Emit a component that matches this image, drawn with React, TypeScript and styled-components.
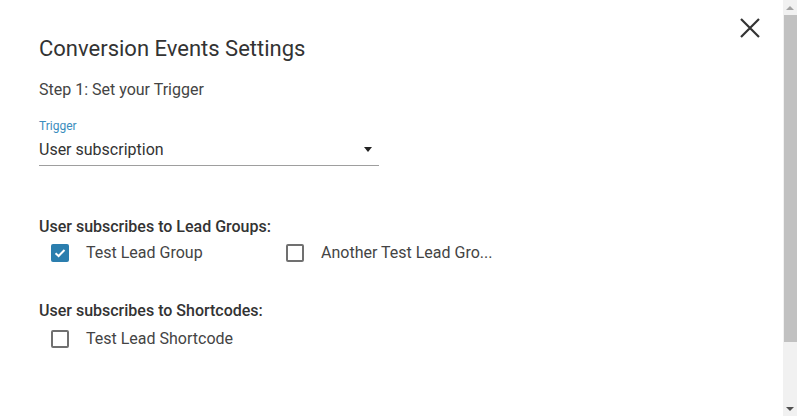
import React from "react";
import styled, { createGlobalStyle } from "styled-components";

const Global = createGlobalStyle`
  html, body { margin: 0; padding: 0; height: 100%; overflow: hidden; }
  body { font-family: Roboto, "Noto Sans", Arial, sans-serif; background: #fff; color: #333; }
`;

const Window = styled.div`
  display: flex;
  height: 100vh;
`;

const Dialog = styled.div`
  position: relative;
  flex: 1;
  box-sizing: border-box;
  padding: 36px 39px 0 39px;
`;

const Scrollbar = styled.div`
  width: 14px;
  display: flex;
  flex-direction: column;
  background: #f1f1f1;
`;

const ScrollButton = styled.div`
  height: 15px;
  display: flex;
  align-items: center;
  justify-content: center;
`;

const Arrow = styled.span<{ $down?: boolean }>`
  width: 0;
  height: 0;
  border-left: 4px solid transparent;
  border-right: 4px solid transparent;
  ${(p) =>
    p.$down ? "border-top: 4px solid #505050;" : "border-bottom: 4px solid #a3a3a3;"}
`;

const Thumb = styled.div`
  height: 327px;
  margin-left: 1px;
  background: #c1c1c1;
`;

const Spacer = styled.div`
  flex: 1;
`;

const CloseButton = styled.button`
  position: absolute;
  top: 15px;
  right: 20px;
  width: 26px;
  height: 26px;
  padding: 0;
  border: 0;
  background: none;
  cursor: pointer;
  display: flex;
  align-items: center;
  justify-content: center;
`;

const Title = styled.h2`
  margin: 0;
  font-size: 22px;
  font-weight: 400;
  line-height: 26px;
  color: #333;
`;

const Step = styled.p`
  margin: 18px 0 0;
  font-size: 16px;
  line-height: 20px;
  color: #444;
`;

const Field = styled.div`
  margin-top: 19px;
  width: 340px;
`;

const FieldLabel = styled.div`
  font-size: 12px;
  line-height: 14px;
  color: #3b8dbd;
`;

const Select = styled.div`
  display: flex;
  align-items: center;
  justify-content: space-between;
  height: 32px;
  border-bottom: 1px solid #9e9e9e;
  font-size: 16px;
  color: #333;
`;

const Caret = styled.span`
  width: 0;
  height: 0;
  border-left: 4px solid transparent;
  border-right: 4px solid transparent;
  border-top: 5px solid #222;
  margin-right: 7px;
`;

const Section = styled.section<{ $gap: number }>`
  margin-top: ${(p) => p.$gap}px;
`;

const SectionTitle = styled.div`
  font-size: 16px;
  font-weight: 500;
  line-height: 20px;
  color: #333;
`;

const Options = styled.div<{ $top: number }>`
  display: flex;
  margin-top: ${(p) => p.$top}px;
  padding-left: 12px;
`;

const Option = styled.label`
  display: flex;
  align-items: center;
  width: 235px;
  font-size: 16px;
  line-height: 20px;
  color: #444;
  cursor: pointer;
`;

const Box = styled.span<{ $checked?: boolean }>`
  box-sizing: border-box;
  width: 18px;
  height: 18px;
  border-radius: 2px;
  margin-right: 17px;
  display: flex;
  align-items: center;
  justify-content: center;
  border: ${(p) => (p.$checked ? "none" : "2px solid #707070")};
  background: ${(p) => (p.$checked ? "#2b7eae" : "#fff")};
`;

const Check = () => (
  <svg width="12" height="10" viewBox="0 0 12 10">
    <path d="M1.5 5.2 L4.6 8 L10.5 2" fill="none" stroke="#fff" strokeWidth="2" />
  </svg>
);

const CheckOption = ({ checked, label }: { checked?: boolean; label: string }) => (
  <Option>
    <Box $checked={checked}>{checked && <Check />}</Box>
    {label}
  </Option>
);

export default function App() {
  return (
    <>
      <Global />
      <Window>
        <Dialog>
          <CloseButton aria-label="Close">
            <svg width="22" height="22" viewBox="0 0 22 22">
              <path d="M2 2 L20 20 M20 2 L2 20" stroke="#333" strokeWidth="2.2" />
            </svg>
          </CloseButton>
          <Title>Conversion Events Settings</Title>
          <Step>Step 1: Set your Trigger</Step>
          <Field>
            <FieldLabel>Trigger</FieldLabel>
            <Select>
              User subscription
              <Caret />
            </Select>
          </Field>
          <Section $gap={51}>
            <SectionTitle>User subscribes to Lead Groups:</SectionTitle>
            <Options $top={6}>
              <CheckOption checked label="Test Lead Group" />
              <CheckOption label="Another Test Lead Gro..." />
            </Options>
          </Section>
          <Section $gap={38}>
            <SectionTitle>User subscribes to Shortcodes:</SectionTitle>
            <Options $top={8}>
              <CheckOption label="Test Lead Shortcode" />
            </Options>
          </Section>
        </Dialog>
        <Scrollbar>
          <ScrollButton>
            <Arrow />
          </ScrollButton>
          <Thumb />
          <Spacer />
          <ScrollButton>
            <Arrow $down />
          </ScrollButton>
        </Scrollbar>
      </Window>
    </>
  );
}
